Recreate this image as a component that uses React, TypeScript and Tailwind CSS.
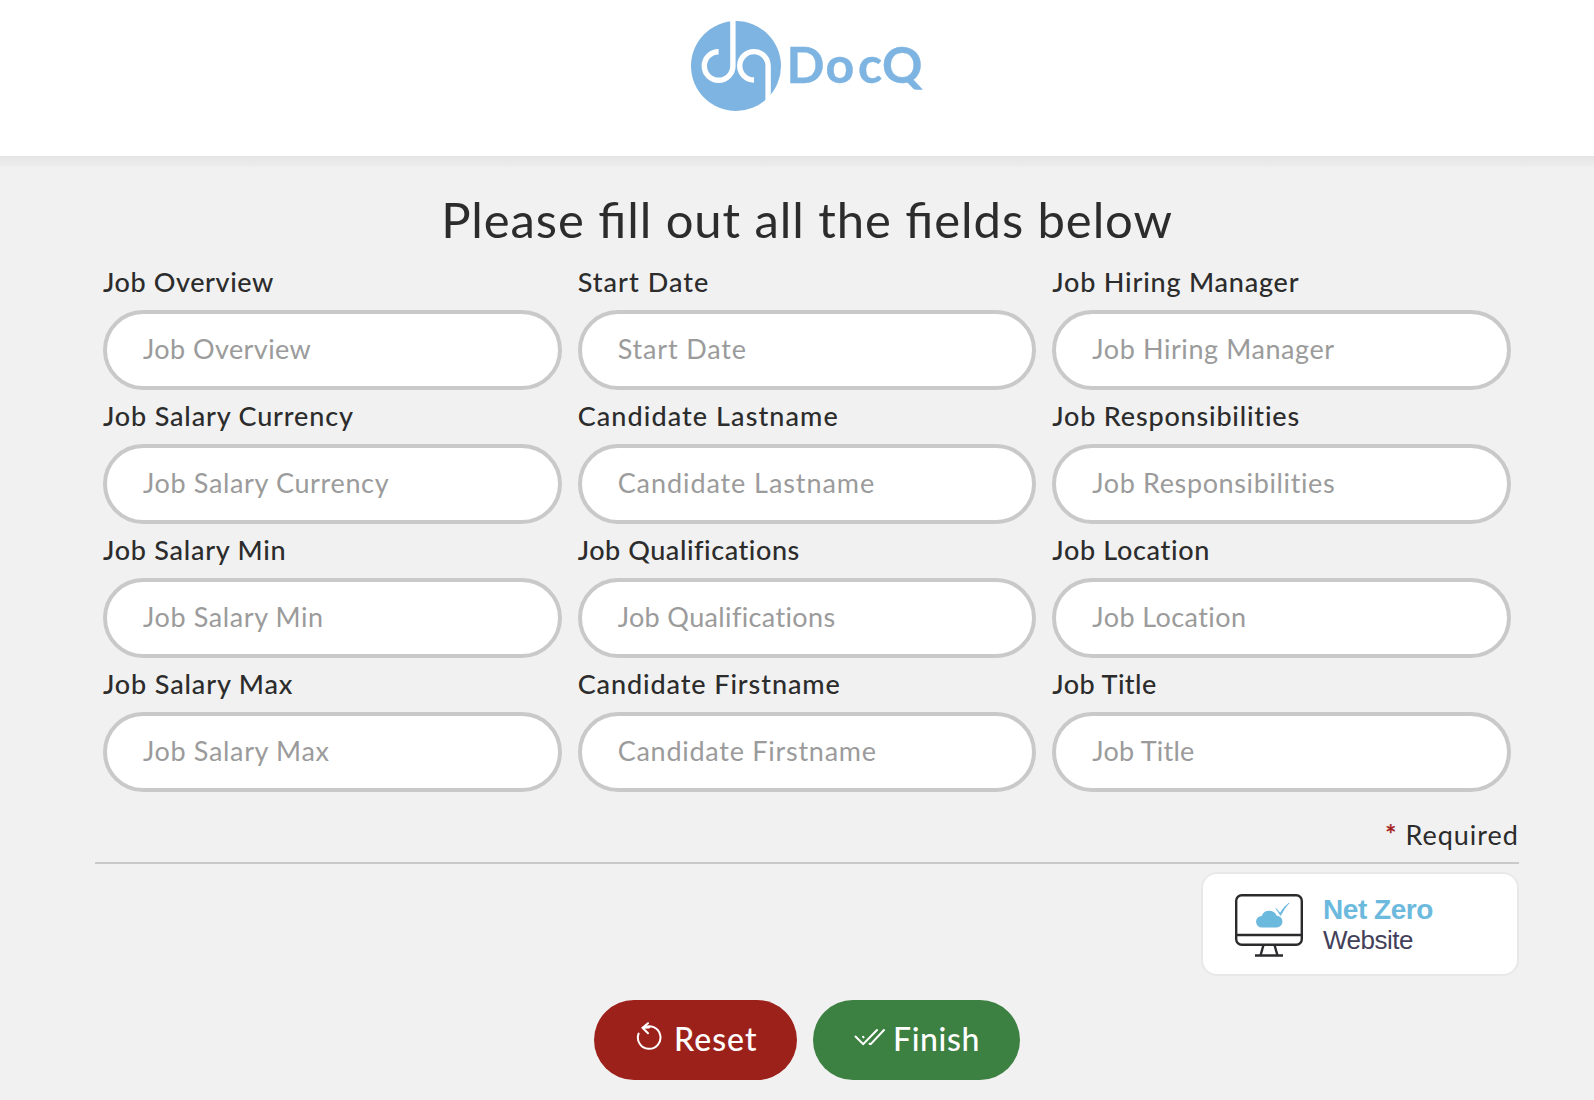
type Field = { name: string; label: string; hint: string };

const fields: Field[] = [
  { name: "Job Overview", label: "tracking-[0.6px]", hint: "tracking-[0.42px]" },
  { name: "Start Date", label: "tracking-[1.04px]", hint: "tracking-[0.82px]" },
  { name: "Job Hiring Manager", label: "tracking-[0.79px]", hint: "tracking-[0.58px]" },
  { name: "Job Salary Currency", label: "tracking-[0.84px]", hint: "tracking-[0.64px]" },
  { name: "Candidate Lastname", label: "tracking-[1.08px]", hint: "tracking-[0.92px]" },
  { name: "Job Responsibilities", label: "tracking-[0.8px]", hint: "tracking-[0.62px]" },
  { name: "Job Salary Min", label: "tracking-[0.74px]", hint: "tracking-[0.6px]" },
  { name: "Job Qualifications", label: "tracking-[0.55px]", hint: "tracking-[0.36px]" },
  { name: "Job Location", label: "tracking-[0.66px]", hint: "tracking-[0.42px]" },
  { name: "Job Salary Max", label: "tracking-[0.86px]", hint: "tracking-[0.65px]" },
  { name: "Candidate Firstname", label: "tracking-[0.9px]", hint: "tracking-[0.74px]" },
  { name: "Job Title", label: "tracking-[0.42px]", hint: "tracking-[0.24px]" },
];

function Logo() {
  return (
    <svg width="240" height="100" viewBox="688 16 240 100" role="img" aria-label="DocQ">
      <circle cx="736" cy="66" r="45" fill="#7eb4e1" />
      <g fill="none" stroke="#fff" strokeWidth="5.4">
        <path d="M718.6 51.7A14.3 14.3 0 1 0 732.9 66V18" />
        <path d="M754 80A14.2 14.2 0 1 1 768.1 66V112" />
      </g>
      <text
        x="786.5 825.5 858 882"
        y="82.5"
        fill="#7eb4e1"
        stroke="#7eb4e1"
        strokeWidth="0.4"
        className="font-['Lato',sans-serif] text-[50px] font-bold"
      >
        DocQ
      </text>
    </svg>
  );
}

function MonitorIcon() {
  return (
    <svg width="68" height="63" viewBox="0 0 68 63" fill="none" stroke="#2b2a2c" strokeWidth="2.4">
      <rect x="1.2" y="1.2" width="65.6" height="49.6" rx="5.5" />
      <path d="M1 41h66M28.5 51l-3 10.500M39.500 51l3 10.500M20 61.500h28" />
      <path
        d="M27 33.500a5.800 5.800 0 0 1-.3-11.600 8 8 0 0 1 15-.1 5.600 5.600 0 0 1-.2 11.700z"
        fill="#6cb9de"
        stroke="none"
      />
      <path d="M41 14.500l4.200 4.700Q48 13.500 54 9Q49 14.500 45.600 21.500z" fill="#6cb9de" stroke="#6cb9de" strokeWidth="0.8" />
    </svg>
  );
}

function ResetIcon() {
  return (
    <svg width="26" height="30" viewBox="0 0 26 30" fill="none" stroke="#fff" strokeWidth="2" strokeLinecap="round">
      <path d="M2.600 11.600A11.300 11.300 0 1 0 7.500 5.800L13 5.500M12 1.200L6.500 5.800l5.500 5.500" />
    </svg>
  );
}

function FinishIcon() {
  return (
    <svg width="32" height="18" viewBox="0 0 32 18" fill="none" stroke="#fff" strokeWidth="2" strokeLinecap="round">
      <path d="M1.500 8.500l7.700 7.700L23 2M15.500 15.800l1.200.4L30 2M9 8.800l.6.600" />
    </svg>
  );
}

export default function App() {
  return (
    <div className="h-[1100px] overflow-hidden bg-[#f1f1f1] font-['Lato',sans-serif] text-[27px] text-[#2c2c2c]">
      <header className="flex h-[156px] justify-center bg-white pt-4 pl-[22px]">
        <Logo />
      </header>
      <div className="h-[11px] bg-linear-to-b from-[#e4e4e4] to-[#eeeeee]" />
      <main className="ml-[95px] w-[1424px]">
        <h1 className="mt-[21px] h-[73px] text-center text-[49px] leading-[62px] tracking-[0.92px] [font-feature-settings:'liga']">
          Please fill out all the fields below
        </h1>
        <form>
          <div className="grid grid-cols-3 gap-x-4 px-2">
            {fields.map((f) => (
              <label key={f.name} className="flex h-[134px] flex-col">
                <span className={`h-[49px] leading-[42px] font-medium whitespace-nowrap ${f.label}`}>{f.name}</span>
                <input
                  type="text"
                  placeholder={f.name}
                  className={`h-20 w-full rounded-full border-4 border-[#c9c9c9] bg-white px-9 pb-[3px] placeholder:text-[#9b9b9b] ${f.hint}`}
                />
              </label>
            ))}
          </div>
          <p className="mt-[15px] h-[52px] border-b-2 border-[#c9c9c9] text-right leading-[45px] tracking-[1px]">
            <span className="text-[#a3201c] [-webkit-text-stroke:0.4px_#a3201c]">*</span> Required
          </p>
          <div className="mt-2 ml-auto flex h-[104px] w-[318px] items-center gap-5 rounded-2xl border-2 border-[#e8e8e8] bg-white pt-0.5 pl-8">
            <MonitorIcon />
            <div className="font-['Liberation_Sans',sans-serif] leading-[30px]">
              <div className="text-[28px] font-bold tracking-[-0.45px] text-[#6cb9de]">Net Zero</div>
              <div className="text-[26px] tracking-[-0.5px] text-[#43405a]">Website</div>
            </div>
          </div>
          <div className="mt-6 flex justify-center gap-4 text-[32px] font-medium text-white">
            <button type="button" className="flex h-20 w-[203px] items-center rounded-full bg-[#9d211b] pb-0.5 pl-[42px]">
              <span className="mr-3 mb-1">
                <ResetIcon />
              </span>
              <span className="tracking-[1.05px]">Reset</span>
            </button>
            <button type="button" className="flex h-20 w-[207px] items-center rounded-full bg-[#3c8042] pb-0.5 pl-[41px]">
              <span className="mr-[7px] mb-1">
                <FinishIcon />
              </span>
              <span className="tracking-[0.62px]">Finish</span>
            </button>
          </div>
        </form>
      </main>
    </div>
  );
}
